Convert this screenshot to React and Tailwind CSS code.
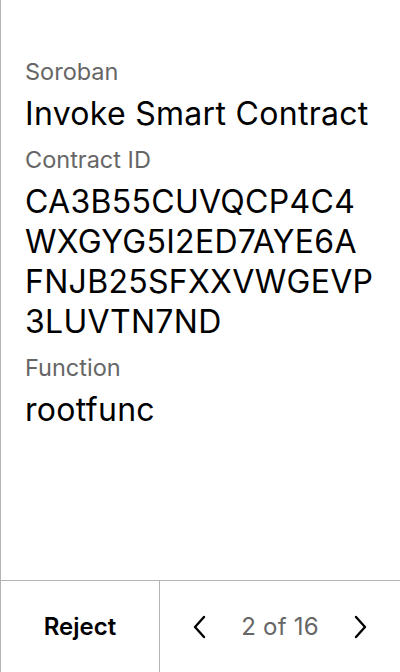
import React from "react";

function Field({ label, children }) {
  return (
    <div className="flex flex-col gap-2">
      <span className="text-[23.5px] leading-[28px] text-[#666666]">{label}</span>
      <div className="text-[32px] leading-[40px] tracking-[0.3px] text-black break-all">{children}</div>
    </div>
  );
}

export default function App() {
  return (
    <div
      className="w-[400px] h-[672px] bg-white border-l border-[#b3b3b3] flex flex-col"
      style={{ fontFamily: "Inter, 'Liberation Sans', sans-serif" }}
    >
      <div className="flex-1 flex flex-col gap-3 pt-[58px] pl-6 pr-2">
        <Field label="Soroban">Invoke Smart Contract</Field>
        <Field label="Contract ID">
          <div>CA3B55CUVQCP4C4</div>
          <div>WXGYG5I2ED7AYE6A</div>
          <div>FNJB25SFXXVWGEVP</div>
          <div>3LUVTN7ND</div>
        </Field>
        <Field label="Function">rootfunc</Field>
      </div>

      {/* footer */}
      <div className="h-[92px] border-t border-[#b3b3b3] flex">
        <button className="w-[159px] border-r border-[#b3b3b3] flex items-center justify-center text-[24px] font-semibold text-black">
          Reject
        </button>
        <div className="flex-1 flex items-center justify-between px-7">
          <svg width="24" height="24" viewBox="0 0 24 24" fill="none" stroke="black" strokeWidth="2.4" strokeLinecap="round" strokeLinejoin="round">
            <polyline points="16 2 7 12 16 22" />
          </svg>
          <span className="text-[24px] tracking-[0.2px] text-[#666666]">2 of 16</span>
          <svg width="24" height="24" viewBox="0 0 24 24" fill="none" stroke="black" strokeWidth="2.4" strokeLinecap="round" strokeLinejoin="round">
            <polyline points="8 2 17 12 8 22" />
          </svg>
        </div>
      </div>
    </div>
  );
}
